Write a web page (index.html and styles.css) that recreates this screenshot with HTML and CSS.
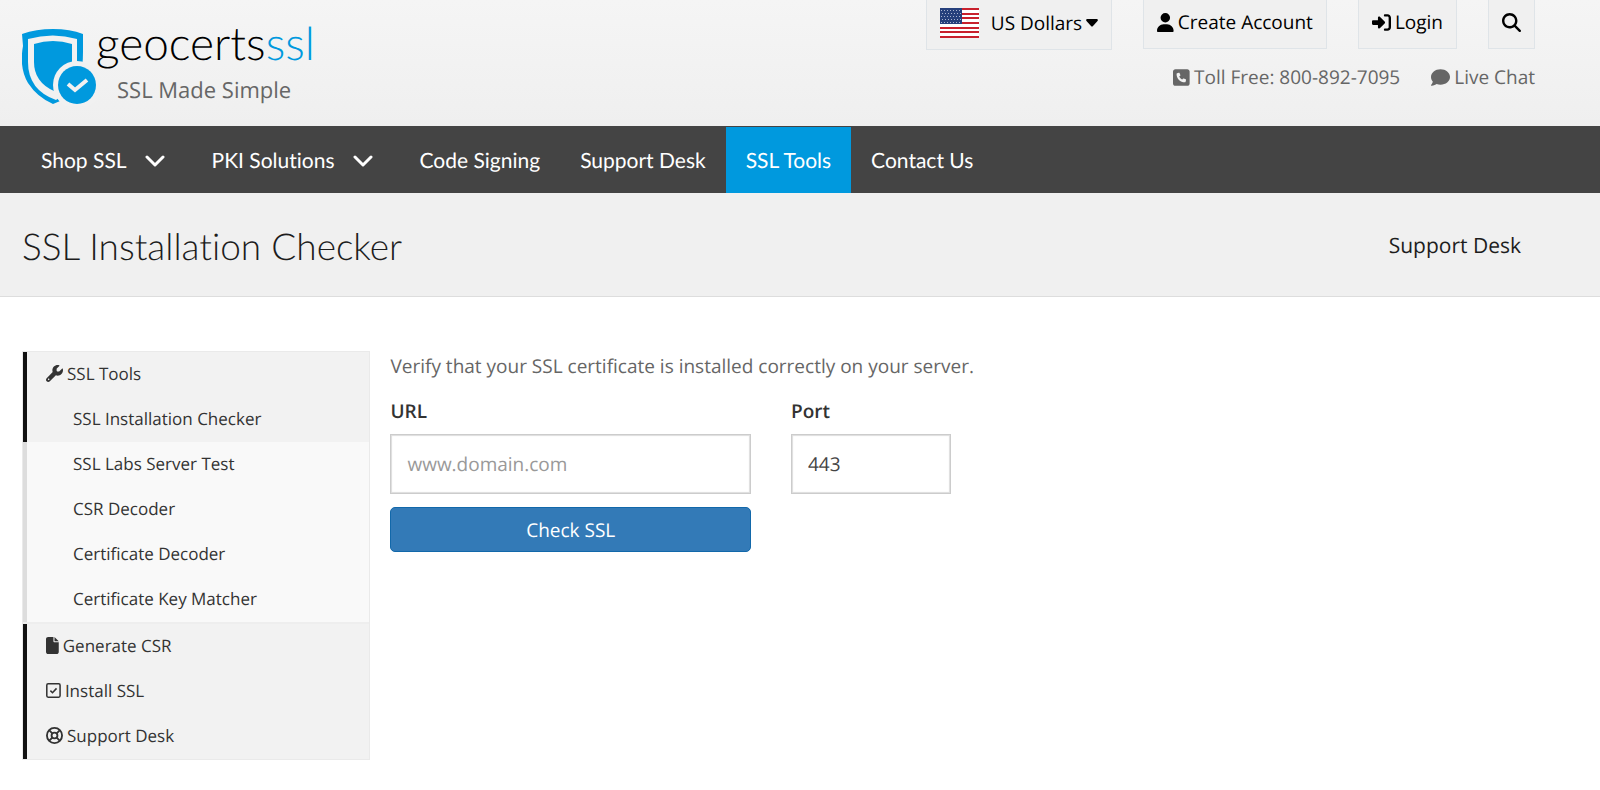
FILE: index.html
```html
<!DOCTYPE html>
<html lang="en">
<head>
<meta charset="utf-8">
<title>SSL Installation Checker</title>
<link rel="stylesheet" href="styles.css">
</head>
<body>
<header class="header">
  <a class="brand" href="#">
    <svg class="brand-mark" viewBox="0 0 76 78" aria-hidden="true">
      <path fill="#0099de" d="M0 6Q14 1 31 1T61 6V24Q61 40 58 47L43 71 31 76Q15 69 6 55Q-3 40 1 18Z"/>
      <path fill="#f1f1f1" d="M6 11Q31 4 55 11V38L42 66 34 72Q6 62 6 34Z"/>
      <path fill="#0099de" d="M12 16Q31 10 50 16V36L32 63Q12 54 12 34Z"/>
      <circle cx="55" cy="57" r="24" fill="#f1f1f1"/>
      <circle cx="55" cy="57" r="19" fill="#0099de"/>
      <path d="M46 56L53 62L65 52" fill="none" stroke="#f1f1f1" stroke-width="4"/>
    </svg>
    <span class="brand-text">
      <span class="brand-name">geocerts<span class="brand-accent">ssl</span></span>
      <span class="brand-tag">SSL Made Simple</span>
    </span>
  </a>
  <div class="header-side">
    <div class="actions">
      <button class="action currency" type="button">
        <svg class="flag" viewBox="0 0 39 30" aria-hidden="true">
          <path fill="#fff" d="M0 0h39v30H0z"/>
          <path stroke="#c8202c" stroke-width="2" d="M0 1h39M0 6h39M0 10h39M0 15h39M0 20h39M0 24h39M0 29h39"/>
          <path fill="#26407c" d="M0 0h22v16H0z"/>
          <path stroke="#a9b4d0" stroke-width="1" stroke-dasharray="1 2" d="M1 2.500h20M2 5.500h19M1 8.500h20M2 11.500h19M1 14.500h20"/>
        </svg>
        <span>US Dollars</span>
        <svg class="caret" viewBox="0 0 12 8" aria-hidden="true"><path fill="currentColor" d="M1 0h10q1.500.5.500 2L7 7q-1 1-2 0L.5 2Q-.5.5 1 0z"/></svg>
      </button>
      <a class="action" href="#">
        <svg class="icon" viewBox="0 0 448 512" aria-hidden="true"><path d="M224 256A128 128 0 1 0 224 0a128 128 0 1 0 0 256zm-45.700 48C79.800 304 0 383.800 0 482.300C0 498.700 13.300 512 29.700 512H418.300c16.400 0 29.700-13.300 29.700-29.700C448 383.800 368.200 304 269.700 304H178.300z"/></svg>
        <span>Create Account</span>
      </a>
      <a class="action" href="#">
        <svg class="icon" viewBox="0 0 512 512" aria-hidden="true"><path d="M217.900 105.900L340.700 228.700c7.200 7.200 11.300 17.100 11.300 27.300s-4.100 20.100-11.300 27.300L217.900 406.100c-6.400 6.400-15 9.900-24 9.900c-18.700 0-33.900-15.200-33.900-33.900V320H32c-17.700 0-32-14.300-32-32v-64c0-17.700 14.300-32 32-32h128v-62.100c0-18.700 15.200-33.900 33.900-33.900c9 0 17.600 3.600 24 9.900zM352 416h64c17.700 0 32-14.300 32-32V128c0-17.700-14.300-32-32-32h-64c-17.700 0-32-14.300-32-32s14.300-32 32-32h64c53 0 96 43 96 96v256c0 53-43 96-96 96h-64c-17.700 0-32-14.300-32-32s14.300-32 32-32z"/></svg>
        <span>Login</span>
      </a>
      <button class="action" type="button" aria-label="Search">
        <svg class="icon" viewBox="0 0 512 512" aria-hidden="true"><path d="M416 208c0 45.900-14.900 88.300-40 122.700L502.600 457.400c12.500 12.500 12.500 32.800 0 45.300s-32.800 12.500-45.300 0L330.700 376c-34.400 25.200-76.800 40-122.700 40C93.100 416 0 322.900 0 208S93.100 0 208 0S416 93.100 416 208zM208 352a144 144 0 1 0 0-288 144 144 0 1 0 0 288z"/></svg>
      </button>
    </div>
    <div class="contacts">
      <a class="contact" href="#">
        <svg class="icon" viewBox="0 0 448 512" aria-hidden="true"><path d="M64 32C28.700 32 0 60.700 0 96V416c0 35.300 28.700 64 64 64H384c35.300 0 64-28.700 64-64V96c0-35.300-28.700-64-64-64H64zm90.700 96.700c9.700-2.600 19.900 2.300 23.700 11.600l20 48c3.400 8.200 1 17.600-5.800 23.200L168 231.700c16.600 35.200 45.100 63.700 80.300 80.300l20.200-24.700c5.600-6.800 15-9.200 23.200-5.800l48 20c9.300 3.900 14.200 14 11.600 23.700l-12 44C336.900 378 329 384 320 384C196.300 384 96 283.700 96 160c0-9 6-16.900 14.700-19.300l44-12z"/></svg>
        <span>Toll Free: 800-892-7095</span>
      </a>
      <a class="contact" href="#">
        <svg class="icon" viewBox="0 0 512 512" aria-hidden="true"><path d="M512 240c0 114.900-114.600 208-256 208c-37.100 0-72.300-6.400-104.100-17.900c-11.900 8.700-31.300 20.600-54.300 30.600C73.600 471.100 44.700 480 16 480c-6.500 0-12.300-3.900-14.800-9.900c-2.500-6-1.100-12.800 3.400-17.400c1.400-1.400 3.200-3.300 6.200-7.100c4.100-5 9.600-12.400 15.200-21.600c10-16.600 19.500-38.400 21.400-62.900C17.700 326.800 0 285.100 0 240C0 125.100 114.600 32 256 32s256 93.100 256 208z"/></svg>
        <span>Live Chat</span>
      </a>
    </div>
  </div>
</header>

<nav class="nav">
  <a class="nav-link" href="#">Shop SSL <svg class="chevron" viewBox="0 0 20 12" aria-hidden="true"><path d="M2 2l8 8 8-8"/></svg></a>
  <a class="nav-link" href="#">PKI Solutions <svg class="chevron" viewBox="0 0 20 12" aria-hidden="true"><path d="M2 2l8 8 8-8"/></svg></a>
  <a class="nav-link" href="#">Code Signing</a>
  <a class="nav-link" href="#">Support Desk</a>
  <a class="nav-link nav-active" href="#">SSL Tools</a>
  <a class="nav-link" href="#">Contact Us</a>
</nav>

<div class="title-bar">
  <h1 class="title">SSL Installation Checker</h1>
  <a class="title-link" href="#">Support Desk</a>
</div>

<div class="page">
  <aside class="sidebar">
    <a class="side-link" href="#">
      <svg class="icon" viewBox="0 0 512 512" aria-hidden="true"><path d="M352 320c88.400 0 160-71.600 160-160c0-15.300-2.200-30.100-6.200-44.200c-3.100-10.800-16.400-13.200-24.300-5.300l-76.800 76.800c-3 3-7.100 4.700-11.300 4.700H336c-8.800 0-16-7.200-16-16V118.600c0-4.200 1.700-8.300 4.700-11.300l76.800-76.800c7.900-7.900 5.400-21.200-5.300-24.300C382.100 2.200 367.300 0 352 0C263.600 0 192 71.600 192 160c0 19.100 3.400 37.500 9.500 54.500L19.900 396.100C7.200 408.800 0 426.100 0 444.100C0 481.600 30.400 512 67.900 512c18 0 35.300-7.200 48-19.900L297.500 310.500c17 6.200 35.400 9.500 54.500 9.500zM80 408a24 24 0 1 1 0 48 24 24 0 1 1 0-48z"/></svg>
      <span>SSL Tools</span>
    </a>
    <div class="subnav">
      <a class="side-link side-sub side-current" href="#">SSL Installation Checker</a>
      <a class="side-link side-sub" href="#">SSL Labs Server Test</a>
      <a class="side-link side-sub" href="#">CSR Decoder</a>
      <a class="side-link side-sub" href="#">Certificate Decoder</a>
      <a class="side-link side-sub" href="#">Certificate Key Matcher</a>
    </div>
    <a class="side-link" href="#">
      <svg class="icon" viewBox="0 0 384 512" aria-hidden="true"><path d="M0 64C0 28.700 28.700 0 64 0H224V128c0 17.700 14.300 32 32 32H384V448c0 35.300-28.700 64-64 64H64c-35.300 0-64-28.700-64-64V64zm384 64H256V0L384 128z"/></svg>
      <span>Generate CSR</span>
    </a>
    <a class="side-link" href="#">
      <svg class="icon icon-line" viewBox="0 0 448 512" aria-hidden="true"><rect x="24" y="56" width="400" height="400" rx="40"/><path d="M132 260l64 64 122-132"/></svg>
      <span>Install SSL</span>
    </a>
    <a class="side-link" href="#">
      <svg class="icon icon-line icon-ring" viewBox="0 0 512 512" aria-hidden="true"><circle cx="256" cy="256" r="228"/><circle cx="256" cy="256" r="88"/><path d="M100 100l90 90M412 100l-90 90M100 412l90-90M412 412l-90-90"/></svg>
      <span>Support Desk</span>
    </a>
  </aside>
  <main class="content">
    <p class="lead">Verify that your SSL certificate is installed correctly on your server.</p>
    <form class="form">
      <div class="field field-wide">
        <label class="label" for="url">URL</label>
        <input class="input" id="url" type="text" placeholder="www.domain.com">
      </div>
      <div class="field">
        <label class="label" for="port">Port</label>
        <input class="input" id="port" type="text" value="443">
      </div>
      <button class="submit" type="button">Check SSL</button>
    </form>
  </main>
</div>
</body>
</html>
```
FILE: styles.css
```css
* { box-sizing: border-box; }

body {
  margin: 0;
  background: #fff;
  color: #666;
  font: 19px/28px "Open Sans", sans-serif;
  font-variant-ligatures: none;
  text-rendering: geometricPrecision;
}

a { color: inherit; text-decoration: none; }
button, input { font: inherit; text-rendering: inherit; }

.icon { height: 19px; fill: currentColor; flex: none; }

.header {
  display: flex;
  justify-content: space-between;
  align-items: flex-start;
  min-height: 126px;
  padding: 0 65px 0 22px;
  background: linear-gradient(#f5f5f5, #efefef);
}

.brand { display: flex; padding-top: 28px; }
.brand-mark { width: 76px; height: 78px; }
.brand-text { display: flex; flex-direction: column; margin: -14px 0 0 -2px; }
.brand-name {
  color: #000;
  font-family: Lato, sans-serif;
  font-size: 46px;
  font-weight: 300;
  line-height: 58px;
}
.brand-accent { color: #0099de; }
.brand-tag { padding-left: 21px; font-size: 22px; line-height: 36px; }

.header-side { display: flex; flex-direction: column; align-items: flex-end; gap: 11px; }
.actions { display: flex; align-items: flex-start; gap: 31px; }
.action {
  display: flex;
  align-items: center;
  gap: 4px;
  height: 49px;
  padding: 0 13px 4px;
  background: #f0f0f0;
  border: 1px solid #dfe4e8;
  border-top: 0;
  color: #000;
}
.currency { height: 50px; }
.flag { width: 39px; height: 30px; margin-right: 8px; }
.caret { width: 12px; height: 8px; }
.contacts { display: flex; gap: 31px; }
.contact { display: flex; align-items: center; gap: 4px; line-height: 32px; }

.nav {
  display: flex;
  padding: 1px 0 0 21px;
  background: #444;
  color: #fff;
  font-family: Lato, sans-serif;
  font-size: 21px;
  line-height: 65px;
}
.nav-link { display: flex; align-items: center; gap: 18px; padding: 1px 20px 0; }
.nav-link:has(.chevron) { padding-right: 27px; }
.nav-active { background: #0099de; }
.chevron {
  width: 20px;
  height: 12px;
  fill: none;
  stroke: currentColor;
  stroke-width: 3;
  stroke-linecap: round;
  stroke-linejoin: round;
}

.title-bar {
  display: flex;
  align-items: center;
  justify-content: space-between;
  min-height: 104px;
  padding: 2px 79px 0 22px;
  background: #f0f0f0;
  border-bottom: 1px solid #ddd;
  color: #1d1d1d;
}
.title {
  margin: 0;
  font-family: Lato, sans-serif;
  font-size: 37px;
  font-weight: 300;
  line-height: 48px;
}
.title-link { font-size: 21px; }

.page {
  display: grid;
  grid-template-columns: minmax(0, 3fr) minmax(0, 10fr);
  align-items: start;
  gap: 20px;
  padding: 54px 48px 0 22px;
}

.sidebar { border: 1px solid #eaeaea; color: #333; font-size: 17px; }
.side-link {
  display: flex;
  align-items: center;
  gap: 4px;
  height: 45px;
  padding: 0 0 2px 19px;
  background: #f2f2f2;
  border-left: 4px solid #111;
}
.side-link .icon { height: 17px; }
.subnav { border-bottom: 2px solid #eee; }
.side-link.side-sub { padding-left: 46px; background: #f9f9f9; border-left-color: #ddd; }
.side-link.side-current { background: #f2f2f2; border-left-color: #111; }
.icon-line { fill: none; stroke: currentColor; stroke-width: 46; }
.icon-ring { stroke-width: 56; }

.content { padding-top: 1px; }
.lead { margin: 0 0 17px; }
.form { display: grid; grid-template-columns: repeat(6, minmax(0, 1fr)); gap: 13px 40px; }
.field-wide { grid-column: span 2; }
.label { display: block; margin-bottom: 9px; color: #333; font-weight: 600; }
.input {
  display: block;
  width: 100%;
  height: 60px;
  padding: 0 16px;
  background: #fff;
  border: 1px solid #ccc;
  border-radius: 0;
  box-shadow: inset 0 0 1px 1px #ddd;
  color: #444;
}
.input::placeholder { color: #999; }
.submit {
  grid-column: 1 / span 2;
  height: 45px;
  background: #337ab7;
  border: 1px solid #1268aa;
  border-radius: 5px;
  color: #fff;
}
```
